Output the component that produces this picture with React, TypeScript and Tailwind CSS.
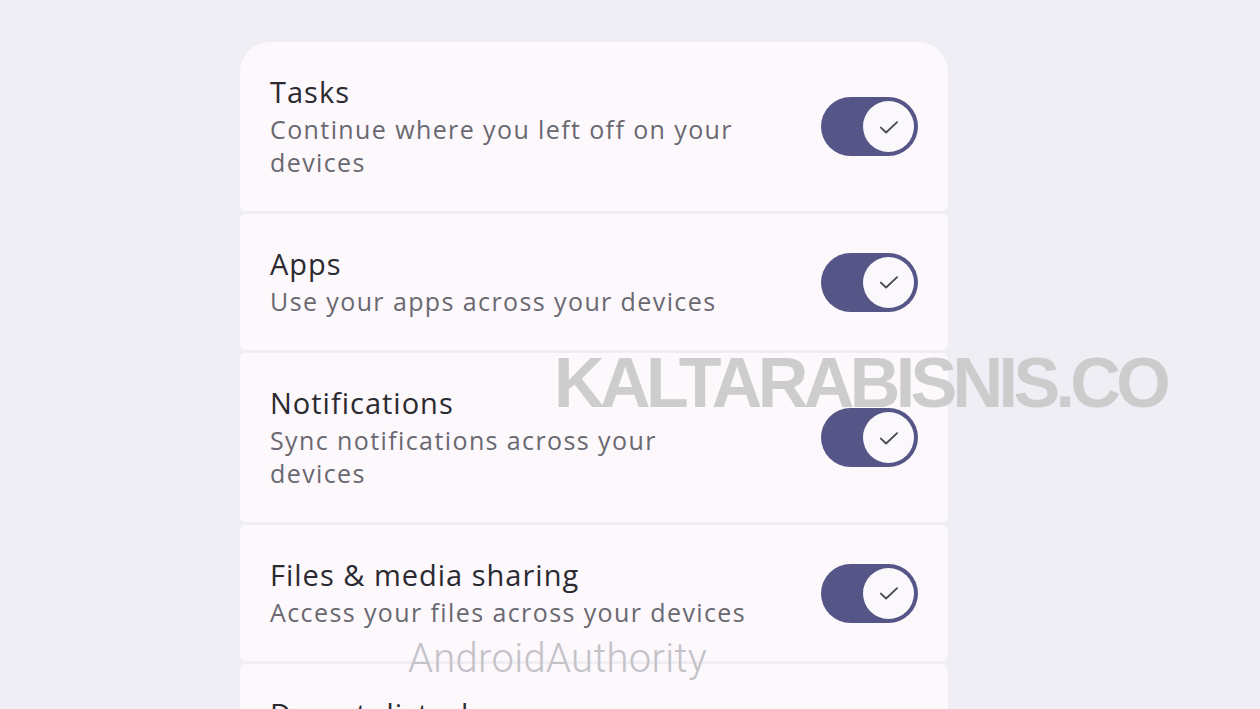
import React from "react";

type Item = { title: string; desc: string };

const items: Item[] = [
  { title: "Tasks", desc: "Continue where you left off on your devices" },
  { title: "Apps", desc: "Use your apps across your devices" },
  { title: "Notifications", desc: "Sync notifications across your devices" },
  { title: "Files & media sharing", desc: "Access your files across your devices" },
  { title: "Do not disturb", desc: "Sync do not disturb across your devices" },
];

const Toggle = () => (
  <div className="flex items-center justify-end w-[97px] h-[59px] rounded-full bg-[#565587] shrink-0">
    <div className="flex items-center justify-center w-[51px] h-[51px] rounded-full bg-[#fbf8fc] mr-[4px]">
      <svg width="26" height="26" viewBox="0 0 24 24" fill="none" stroke="#4a4952" strokeWidth="1.7" strokeLinecap="round" strokeLinejoin="round">
        <path d="M4.5 12.5l4.8 4.6L19.5 7.5" />
      </svg>
    </div>
  </div>
);

const Row = ({ item, first }: { item: Item; first: boolean }) => (
  <div
    className={
      "flex items-center justify-between bg-[#fcf8fc] px-[30px] pt-[32px] pb-[32px] " +
      (first ? "rounded-t-[30px] rounded-b-md" : "rounded-md")
    }
  >
    <div className="w-[482px]">
      <div className="text-[29px] leading-[36px] font-medium tracking-[1px] text-[#2b2a30]">{item.title}</div>
      <div className="mt-[3px] text-[25px] leading-[33px] tracking-[1.4px] text-[#6a6870]">{item.desc}</div>
    </div>
    <Toggle />
  </div>
);

export default function App() {
  return (
    <div
      className="relative w-[1260px] h-[709px] overflow-hidden bg-[#efeef5]"
      style={{ fontFamily: "'Open Sans', 'Noto Sans', sans-serif" }}
    >
      <div className="ml-[240px] mt-[42px] w-[708px] flex flex-col gap-[3px]">
        {items.map((it, i) => (
          <Row key={it.title} item={it} first={i === 0} />
        ))}
      </div>

      {/* watermarks */}
      <div
        className="absolute left-[554px] top-[343px] text-[70px] leading-[80px] font-bold text-[#cbcbcb] tracking-[-4.6px] opacity-95"
        style={{ fontFamily: "'Liberation Sans', Arial, sans-serif" }}
      >
        KALTARABISNIS.CO
      </div>
      <div
        className="absolute left-[408px] top-[635px] text-[40px] leading-[48px] font-light text-[#c4c2c8] tracking-[0.3px]"
        style={{ fontFamily: "Roboto, sans-serif" }}
      >
        AndroidAuthority
      </div>
    </div>
  );
}
